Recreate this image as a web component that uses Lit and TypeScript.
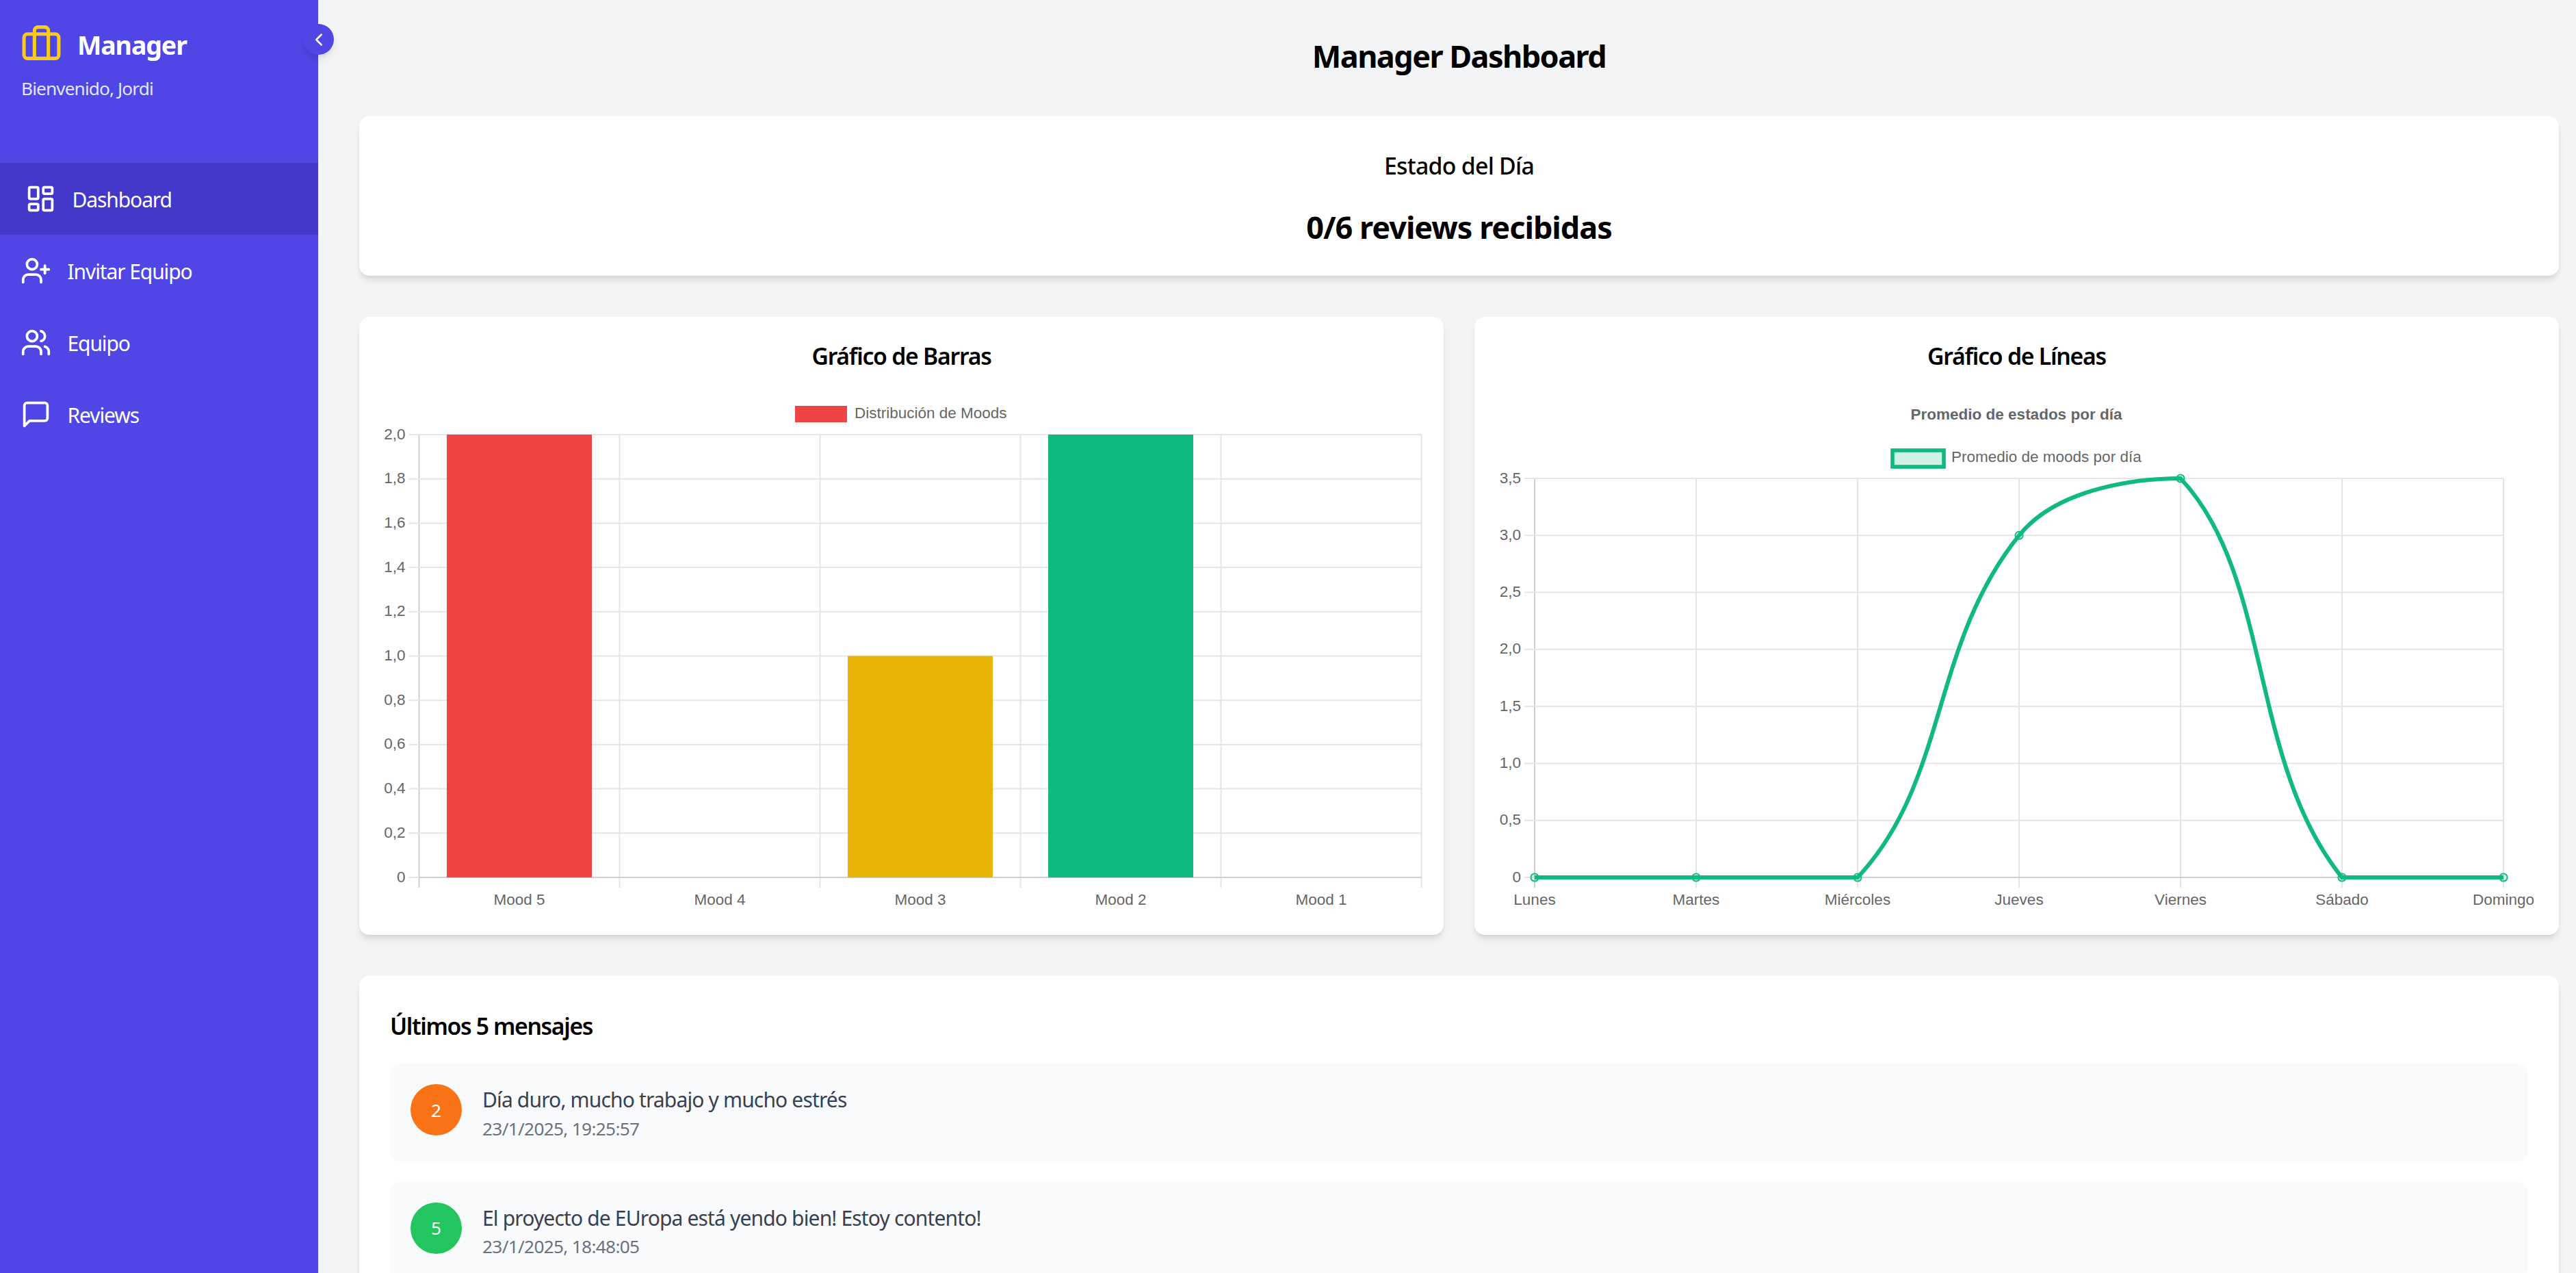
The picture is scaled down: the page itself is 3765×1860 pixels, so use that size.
import { LitElement, css, html, svg } from "lit";
import { customElement } from "lit/decorators.js";

const icon = (body: unknown, size = 45, stroke = "#fff") => html`
  <svg width=${size} height=${size} viewBox="0 0 24 24" fill="none" stroke=${stroke}
    stroke-width="2" stroke-linecap="round" stroke-linejoin="round">${body}</svg>
`;

const icons = {
  briefcase: svg`<rect x="2" y="7" width="20" height="14" rx="2" ry="2"></rect><path d="M16 21V5a2 2 0 0 0-2-2h-4a2 2 0 0 0-2 2v16"></path>`,
  dashboard: svg`<rect x="3" y="3" width="7" height="9" rx="1"></rect><rect x="14" y="3" width="7" height="5" rx="1"></rect><rect x="14" y="12" width="7" height="9" rx="1"></rect><rect x="3" y="16" width="7" height="5" rx="1"></rect>`,
  userPlus: svg`<path d="M16 21v-2a4 4 0 0 0-4-4H6a4 4 0 0 0-4 4v2"></path><circle cx="9" cy="7" r="4"></circle><line x1="19" y1="8" x2="19" y2="14"></line><line x1="22" y1="11" x2="16" y2="11"></line>`,
  users: svg`<path d="M16 21v-2a4 4 0 0 0-4-4H6a4 4 0 0 0-4 4v2"></path><circle cx="9" cy="7" r="4"></circle><path d="M22 21v-2a4 4 0 0 0-3-3.87"></path><path d="M16 3.13a4 4 0 0 1 0 7.75"></path>`,
  message: svg`<path d="M21 15a2 2 0 0 1-2 2H7l-4 4V5a2 2 0 0 1 2-2h14a2 2 0 0 1 2 2z"></path>`,
  chevron: svg`<path d="m15 18-6-6 6-6"></path>`,
};

const navItems = [
  { label: "Dashboard", icon: icons.dashboard, active: true },
  { label: "Invitar Equipo", icon: icons.userPlus, active: false },
  { label: "Equipo", icon: icons.users, active: false },
  { label: "Reviews", icon: icons.message, active: false },
];

const messages = [
  { mood: 2, color: "#f97316", text: "Día duro, mucho trabajo y mucho estrés", date: "23/1/2025, 19:25:57" },
  { mood: 5, color: "#22c55e", text: "El proyecto de EUropa está yendo bien! Estoy contento!", date: "23/1/2025, 18:48:05" },
];

const GRID = "#e5e5e5";
const AXIS = "#cfcfcf";
const GREEN = "#10b981";
const BOTTOM = 1282;
const TICK_END = 1297;

// Y axis shared by both charts, labels use the es-ES decimal comma
function yAxis(labels: string[], top: number, axisX: number, rightX: number) {
  const step = (BOTTOM - top) / (labels.length - 1);
  return labels.map((label, i) => {
    const y = top + i * step;
    return svg`
      <line x1=${axisX - 15} x2=${rightX} y1=${y} y2=${y} stroke=${GRID} stroke-width="2"></line>
      <text class="tick" x=${axisX - 20} y=${y + 6.5} text-anchor="end">${label}</text>
    `;
  });
}

function barChart() {
  const left = 612.5;
  const col = 293;
  const top = 635;
  const labels = ["2,0", "1,8", "1,6", "1,4", "1,2", "1,0", "0,8", "0,6", "0,4", "0,2", "0"];
  const bars = [
    { label: "Mood 5", value: 2, color: "#ef4444" },
    { label: "Mood 4", value: 0, color: "#f97316" },
    { label: "Mood 3", value: 1, color: "#eab308" },
    { label: "Mood 2", value: 2, color: GREEN },
    { label: "Mood 1", value: 0, color: "#22c55e" },
  ];
  const right = left + col * bars.length;
  return html`
    <svg class="chart" viewBox="555 570 1525 766">
      ${[0, 1, 2, 3, 4, 5].map((i) => svg`
        <line x1=${left + i * col} x2=${left + i * col} y1=${top} y2=${TICK_END}
          stroke=${i === 0 ? AXIS : GRID} stroke-width="2"></line>
      `)}
      ${yAxis(labels, top, left, right)}
      <line x1=${left} x2=${right} y1=${BOTTOM} y2=${BOTTOM} stroke=${AXIS} stroke-width="2"></line>
      ${bars.map((b, i) => {
        const h = ((BOTTOM - top) * b.value) / 2;
        const cx = left + col * (i + 0.5);
        return svg`
          <rect x=${cx - 106} y=${BOTTOM - h} width="212" height=${h} fill=${b.color}></rect>
          <text class="tick" x=${cx} y="1322" text-anchor="middle">${b.label}</text>
        `;
      })}
      <rect x="1162" y="593" width="76" height="24" fill="#ef4444"></rect>
      <text class="tick" x="1249" y="611">Distribución de Moods</text>
    </svg>
  `;
}

// Same spline as a tension 0.4 chart line, control points capped to the plot area
function splinePath(pts: { x: number; y: number }[], top: number) {
  const t = 0.4;
  const cps = pts.map((p, i) => {
    const prev = pts[i - 1] ?? p;
    const next = pts[i + 1] ?? p;
    const d01 = Math.hypot(p.x - prev.x, p.y - prev.y);
    const d12 = Math.hypot(next.x - p.x, next.y - p.y);
    const total = d01 + d12 || 1;
    const fa = (t * d01) / total;
    const fb = (t * d12) / total;
    const cap = (v: number) => Math.min(BOTTOM, Math.max(top, v));
    return {
      px: p.x - fa * (next.x - prev.x),
      py: cap(p.y - fa * (next.y - prev.y)),
      nx: p.x + fb * (next.x - prev.x),
      ny: cap(p.y + fb * (next.y - prev.y)),
    };
  });
  let d = `M${pts[0].x} ${pts[0].y}`;
  for (let i = 1; i < pts.length; i++) {
    d += ` C${cps[i - 1].nx} ${cps[i - 1].ny} ${cps[i].px} ${cps[i].py} ${pts[i].x} ${pts[i].y}`;
  }
  return d;
}

function lineChart() {
  const left = 2243;
  const col = 236;
  const top = 699;
  const right = left + col * 6;
  const labels = ["3,5", "3,0", "2,5", "2,0", "1,5", "1,0", "0,5", "0"];
  const days = ["Lunes", "Martes", "Miércoles", "Jueves", "Viernes", "Sábado", "Domingo"];
  const values = [0, 0, 0, 3, 3.5, 0, 0];
  const pts = values.map((v, i) => ({
    x: left + i * col,
    y: BOTTOM - ((BOTTOM - top) * v) / 3.5,
  }));
  return html`
    <svg class="chart" viewBox="2185 570 1525 766">
      ${days.map((day, i) => svg`
        <line x1=${left + i * col} x2=${left + i * col} y1=${top} y2=${TICK_END}
          stroke=${i === 0 ? AXIS : GRID} stroke-width="2"></line>
        <text class="tick" x=${left + i * col} y="1322" text-anchor="middle">${day}</text>
      `)}
      ${yAxis(labels, top, left, right)}
      <line x1=${left} x2=${right} y1=${BOTTOM} y2=${BOTTOM} stroke=${AXIS} stroke-width="2"></line>
      <path d=${splinePath(pts, top)} fill="none" stroke=${GREEN} stroke-width="6"></path>
      ${pts.map((p) => svg`
        <circle cx=${p.x} cy=${p.y} r="5.6" fill="rgba(16,185,129,.2)" stroke=${GREEN} stroke-width="1.9"></circle>
      `)}
      <text class="tick title" x="2947" y="612.5" text-anchor="middle">Promedio de estados por día</text>
      <rect x="2766" y="658" width="75" height="24" fill="rgba(16,185,129,.2)" stroke=${GREEN} stroke-width="5.6"></rect>
      <text class="tick" x="2852" y="675">Promedio de moods por día</text>
    </svg>
  `;
}

@customElement("app-root")
export class AppRoot extends LitElement {
  static styles = css`
    :host {
      display: flex;
      height: 100vh;
      overflow: hidden;
      background: #f3f4f6;
      color: #000;
      font-family: "Noto Sans", "Open Sans", sans-serif;
    }

    .sidebar {
      position: relative;
      flex: 0 0 465px;
      background: #4f46e5;
      color: #fff;
    }

    .brand {
      display: flex;
      align-items: center;
      gap: 22px;
      height: 61px;
      margin: 32px 0 0 30px;
    }

    .brand-name {
      padding-top: 6px;
      font-size: 37.5px;
      font-weight: 700;
      letter-spacing: -1.1px;
    }

    .welcome {
      margin: 18px 0 0 31px;
      font-size: 26.25px;
      line-height: 36px;
      color: #e0e7ff;
      letter-spacing: -0.9px;
    }

    .nav {
      margin-top: 91px;
    }

    .nav-item {
      display: flex;
      align-items: center;
      gap: 23.5px;
      height: 105px;
      padding-left: 30px;
      font-size: 30px;
      letter-spacing: -1.1px;
    }

    .nav-item span {
      padding-top: 2px;
    }

    .nav-item.active {
      padding-left: 37px;
      background: #4338ca;
    }

    .toggle {
      position: absolute;
      top: 35px;
      left: 443px;
      display: flex;
      align-items: center;
      justify-content: center;
      width: 45px;
      height: 45px;
      border-radius: 50%;
      background: #4f46e5;
      box-shadow: 0 8px 14px -3px rgba(0, 0, 0, 0.12), 0 4px 6px -4px rgba(0, 0, 0, 0.1);
    }

    .main {
      flex: 1;
      min-width: 0;
      padding: 52px 25px 0 60px;
    }

    h1 {
      margin: 0 0 58px;
      font-size: 45px;
      line-height: 60px;
      font-weight: 700;
      text-align: center;
      letter-spacing: -1.55px;
    }

    .card {
      background: #fff;
      border-radius: 15px;
      box-shadow: 0 7.5px 11px -2px rgba(0, 0, 0, 0.1), 0 4px 7.5px -4px rgba(0, 0, 0, 0.1);
    }

    .status {
      height: 233px;
      padding-top: 47px;
      margin-bottom: 60px;
      box-sizing: border-box;
      text-align: center;
    }

    .status h2 {
      margin: 0 0 31px;
      font-size: 33.75px;
      line-height: 50px;
      font-weight: 500;
      letter-spacing: -0.7px;
    }

    .status p {
      margin: 0;
      font-size: 45px;
      line-height: 67px;
      font-weight: 700;
      letter-spacing: -1px;
    }

    .charts {
      display: grid;
      grid-template-columns: 1fr 1fr;
      gap: 45px;
      margin-bottom: 60px;
    }

    .chart-card {
      padding: 30px;
      height: 903px;
      box-sizing: border-box;
    }

    .chart-card h3 {
      margin: 4px 0 26px;
      font-size: 33.75px;
      line-height: 47px;
      font-weight: 600;
      text-align: center;
      letter-spacing: -1.25px;
    }

    .chart {
      display: block;
      width: 1525px;
      height: 766px;
    }

    .tick {
      font-family: "Liberation Sans", Arial, sans-serif;
      font-size: 22.5px;
      fill: #666;
    }

    .tick.title {
      font-weight: 700;
    }

    .messages {
      padding: 45px;
    }

    .messages h3 {
      margin: 3px 0 30px;
      font-size: 33.75px;
      line-height: 50px;
      font-weight: 600;
      letter-spacing: -1.37px;
    }

    .message {
      display: flex;
      gap: 30px;
      padding: 30px;
      margin-bottom: 30px;
      background: #f9fafb;
      border-radius: 15px;
    }

    .mood {
      display: flex;
      align-items: center;
      justify-content: center;
      flex: 0 0 75px;
      height: 75px;
      border-radius: 50%;
      color: #fff;
      font-size: 26.25px;
    }

    .message-text {
      font-size: 30px;
      line-height: 45px;
      color: #374151;
      letter-spacing: -0.85px;
    }

    .message-date {
      padding-top: 1.5px;
      font-size: 26.25px;
      line-height: 36px;
      color: #6b7280;
      letter-spacing: -0.7px;
    }
  `;

  render() {
    return html`
      <aside class="sidebar">
        <div class="brand">
          ${icon(icons.briefcase, 61, "#facc15")}
          <span class="brand-name">Manager</span>
        </div>
        <div class="welcome">Bienvenido, Jordi</div>
        <nav class="nav">
          ${navItems.map((item) => html`
            <div class="nav-item ${item.active ? "active" : ""}">
              ${icon(item.icon)}
              <span>${item.label}</span>
            </div>
          `)}
        </nav>
        <div class="toggle">${icon(icons.chevron, 30)}</div>
      </aside>
      <main class="main">
        <h1>Manager Dashboard</h1>
        <section class="card status">
          <h2>Estado del Día</h2>
          <p>0/6 reviews recibidas</p>
        </section>
        <section class="charts">
          <div class="card chart-card">
            <h3>Gráfico de Barras</h3>
            ${barChart()}
          </div>
          <div class="card chart-card">
            <h3>Gráfico de Líneas</h3>
            ${lineChart()}
          </div>
        </section>
        <section class="card messages">
          <h3>Últimos 5 mensajes</h3>
          ${messages.map((m) => html`
            <div class="message">
              <div class="mood" style="background:${m.color}">${m.mood}</div>
              <div>
                <div class="message-text">${m.text}</div>
                <div class="message-date">${m.date}</div>
              </div>
            </div>
          `)}
        </section>
      </main>
    `;
  }
}
